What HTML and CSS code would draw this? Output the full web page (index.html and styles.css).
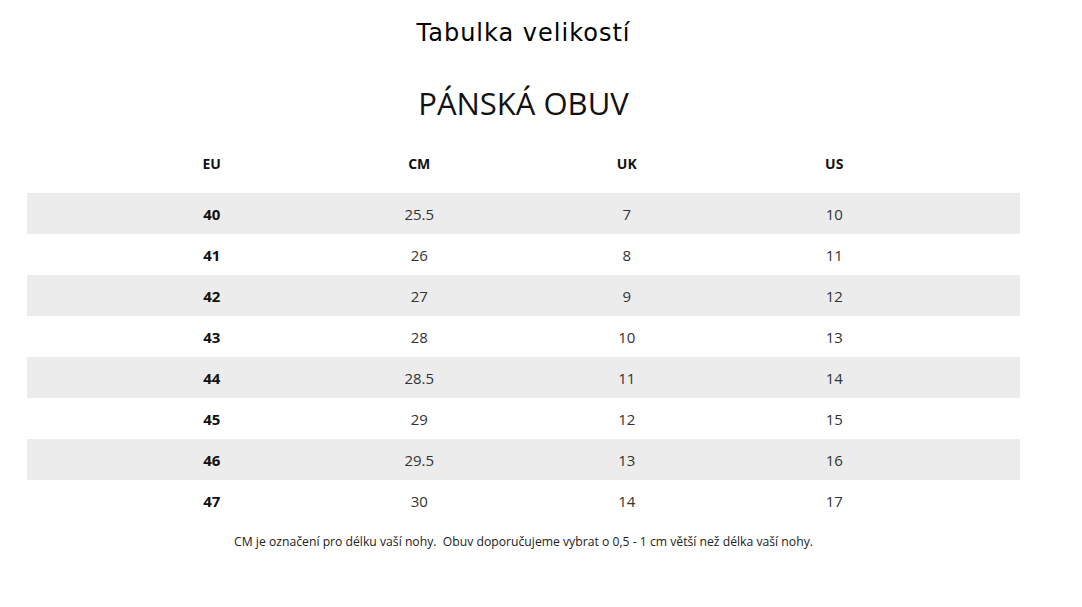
FILE: index.html
```html
<!DOCTYPE html>
<html lang="cs">
<head>
<meta charset="utf-8">
<title>Tabulka velikostí</title>
<link rel="stylesheet" href="styles.css">
</head>
<body>
<div class="page">
  <h1 class="title">Tabulka velikostí</h1>
  <h2 class="subtitle">PÁNSKÁ OBUV</h2>
  <div class="table">
    <div class="row head"><span>EU</span><span>CM</span><span>UK</span><span>US</span></div>
    <div class="body">
      <div class="row odd"><b>40</b><span>25.5</span><span>7</span><span>10</span></div>
      <div class="row"><b>41</b><span>26</span><span>8</span><span>11</span></div>
      <div class="row odd"><b>42</b><span>27</span><span>9</span><span>12</span></div>
      <div class="row"><b>43</b><span>28</span><span>10</span><span>13</span></div>
      <div class="row odd"><b>44</b><span>28.5</span><span>11</span><span>14</span></div>
      <div class="row"><b>45</b><span>29</span><span>12</span><span>15</span></div>
      <div class="row odd"><b>46</b><span>29.5</span><span>13</span><span>16</span></div>
      <div class="row"><b>47</b><span>30</span><span>14</span><span>17</span></div>
    </div>
  </div>
  <p class="note">CM je označení pro délku vaší nohy.&nbsp; Obuv doporučujeme vybrat o 0,5 - 1 cm větší než délka vaší nohy.</p>
</div>
</body>
</html>
```
FILE: styles.css
```css
html, body { margin: 0; padding: 0; background: #fff; }
body { font-family: "Open Sans", "Liberation Sans", sans-serif; color: #333; }
.page { width: 993px; margin-left: 27px; padding-top: 14px; }
.title {
  margin: 0; text-align: center;
  font-family: "DejaVu Sans", "Open Sans", sans-serif; font-weight: 400;
  font-size: 24px; line-height: 38px; color: #000; letter-spacing: 1px;
}
.subtitle {
  margin: 30px 0 0; text-align: center;
  font-weight: 400; font-size: 31px; line-height: 42px; color: #111;
}
.table { margin-top: 19px; }
.row {
  display: grid;
  grid-template-columns: repeat(4, 207.5px);
  padding-left: 81px;
  height: 41px;
  align-items: center;
  font-size: 15px;
  text-align: center;
}
.row b { font-weight: 700; color: #111; }
.head { height: 41px; font-weight: 700; font-size: 14px; color: #111; margin-bottom: 9px; }
.odd { background: #ececec; }
.note {
  margin: 12px 0 0; text-align: center;
  font-size: 12.2px; line-height: 17px; color: #222;
}
```
